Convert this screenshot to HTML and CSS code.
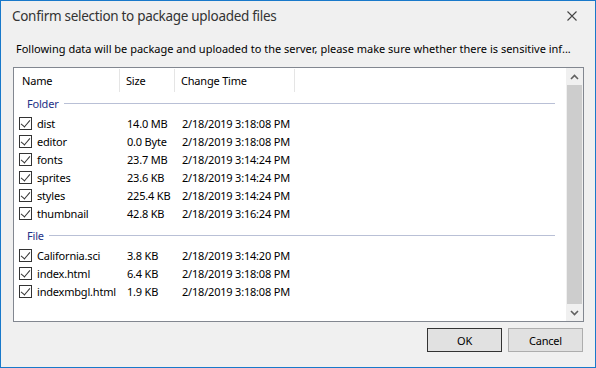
FILE: index.html
```html
<!DOCTYPE html>
<html>
<head>
<meta charset="utf-8">
<link rel="stylesheet" href="styles.css">
</head>
<body>
<div class="window">
  <div class="titlebar">
    <span class="title">Confirm selection to package uploaded files</span>
    <svg class="close" width="10" height="10" viewBox="0 0 10 10"><path d="M0.5 0.5L9.5 9.5M9.5 0.5L0.5 9.5" stroke="#444" stroke-width="1.1" fill="none"/></svg>
  </div>
  <div class="message">Following data will be package and uploaded to the server, please make sure whether there is sensitive inf...</div>
  <div class="listbox">
    <div class="content">
      <div class="header">
        <div class="hcell c-name">Name</div>
        <div class="hcell c-size">Size</div>
        <div class="hcell c-time">Change Time</div>
      </div>
      <div class="group"><span class="gtitle">Folder</span><span class="gline"></span></div>
      <div class="row"><div class="c-name"><span class="cb"></span>dist</div><div class="c-size">14.0 MB</div><div class="c-time">2/18/2019 3:18:08 PM</div></div>
      <div class="row"><div class="c-name"><span class="cb"></span>editor</div><div class="c-size">0.0 Byte</div><div class="c-time">2/18/2019 3:18:08 PM</div></div>
      <div class="row"><div class="c-name"><span class="cb"></span>fonts</div><div class="c-size">23.7 MB</div><div class="c-time">2/18/2019 3:14:24 PM</div></div>
      <div class="row"><div class="c-name"><span class="cb"></span>sprites</div><div class="c-size">23.6 KB</div><div class="c-time">2/18/2019 3:14:24 PM</div></div>
      <div class="row"><div class="c-name"><span class="cb"></span>styles</div><div class="c-size">225.4 KB</div><div class="c-time">2/18/2019 3:14:24 PM</div></div>
      <div class="row"><div class="c-name"><span class="cb"></span>thumbnail</div><div class="c-size">42.8 KB</div><div class="c-time">2/18/2019 3:16:24 PM</div></div>
      <div class="group second"><span class="gtitle">File</span><span class="gline"></span></div>
      <div class="row"><div class="c-name"><span class="cb"></span>California.sci</div><div class="c-size">3.8 KB</div><div class="c-time">2/18/2019 3:14:20 PM</div></div>
      <div class="row"><div class="c-name"><span class="cb"></span>index.html</div><div class="c-size">6.4 KB</div><div class="c-time">2/18/2019 3:18:08 PM</div></div>
      <div class="row"><div class="c-name"><span class="cb"></span>indexmbgl.html</div><div class="c-size">1.9 KB</div><div class="c-time">2/18/2019 3:18:08 PM</div></div>
    </div>
    <div class="scrollbar">
      <div class="arrow"><svg width="9" height="6" viewBox="0 0 9 6"><path d="M1 5L4.5 1.5L8 5" stroke="#606060" stroke-width="1.6" fill="none"/></svg></div>
      <div class="thumb"></div>
      <div class="arrow"><svg width="9" height="6" viewBox="0 0 9 6"><path d="M1 1L4.5 4.5L8 1" stroke="#606060" stroke-width="1.6" fill="none"/></svg></div>
    </div>
  </div>
  <div class="footer">
    <button class="btn default">OK</button>
    <button class="btn">Cancel</button>
  </div>
</div>
</body>
</html>
```

FILE: styles.css
```css
html, body {
  margin: 0;
  padding: 0;
}
body {
  font-family: "Noto Sans", "Open Sans", sans-serif;
  font-size: 11px;
  letter-spacing: -0.2px;
  color: #000;
}
.window {
  width: 596px;
  height: 368px;
  box-sizing: border-box;
  border: 1px solid #1979ca;
  background: #f0f0f0;
  display: flex;
  flex-direction: column;
}
.titlebar {
  height: 30px;
  display: flex;
  align-items: center;
  justify-content: space-between;
  padding: 0 18px 0 11px;
}
.title {
  font-size: 13.5px;
  letter-spacing: -0.3px;
  color: #333;
}
.message {
  height: 36px;
  line-height: 36px;
  padding-left: 15px;
  white-space: nowrap;
  letter-spacing: 0;
}
.listbox {
  margin-left: 12px;
  width: 571px;
  height: 255px;
  box-sizing: border-box;
  border: 1px solid #828790;
  background: #fff;
  display: flex;
}
.content {
  flex: 1;
}
.header {
  height: 24px;
  display: flex;
}
.hcell {
  display: flex;
  align-items: center;
  box-sizing: border-box;
  border-right: 1px solid #e5e5e5;
  height: 23px;
  margin-top: 1px;
}
.c-name { width: 106px; }
.c-size { width: 55px; }
.c-time { width: 120px; }
.header .c-name { padding-left: 8px; }
.header .c-size { padding-left: 6px; }
.header .c-time { padding-left: 6px; }
.group {
  height: 22px;
  display: flex;
  align-items: center;
  padding-left: 13px;
  padding-right: 11px;
}
.group.second {
  margin-top: 2px;
}
.gtitle {
  color: #1e3287;
  margin-right: 5px;
}
.gline {
  flex: 1;
  height: 1px;
  background: #b9c0d6;
}
.row {
  height: 18px;
  display: flex;
  align-items: center;
  white-space: nowrap;
}
.row .c-name {
  display: flex;
  align-items: center;
  padding-left: 5px;
  box-sizing: border-box;
}
.row .c-size { padding-left: 7px; box-sizing: border-box; }
.row .c-time { padding-left: 7px; box-sizing: border-box; }
.cb {
  width: 13px;
  height: 13px;
  box-sizing: border-box;
  border: 1px solid #333;
  margin-right: 5px;
  position: relative;
  flex: none;
}
.cb::after {
  content: "";
  position: absolute;
  left: 3px;
  top: 0px;
  width: 4px;
  height: 8px;
  border-right: 1.3px solid #333;
  border-bottom: 1.3px solid #333;
  transform: rotate(40deg);
}
.scrollbar {
  width: 17px;
  background: #f0f0f0;
  display: flex;
  flex-direction: column;
}
.arrow {
  height: 17px;
  display: flex;
  align-items: center;
  justify-content: center;
}
.thumb {
  flex: 1;
  background: #cdcdcd;
  margin: 0 1px;
}
.footer {
  display: flex;
  justify-content: flex-end;
  gap: 6px;
  padding: 6px 12px 0 0;
}
.btn {
  width: 75px;
  height: 24px;
  box-sizing: border-box;
  background: #e1e1e1;
  border: 1px solid #adadad;
  font-family: "Noto Sans", "Open Sans", sans-serif;
  font-size: 11px;
  letter-spacing: -0.2px;
  color: #000;
  padding: 0;
}
.btn.default {
  border-color: #333;
}
```
